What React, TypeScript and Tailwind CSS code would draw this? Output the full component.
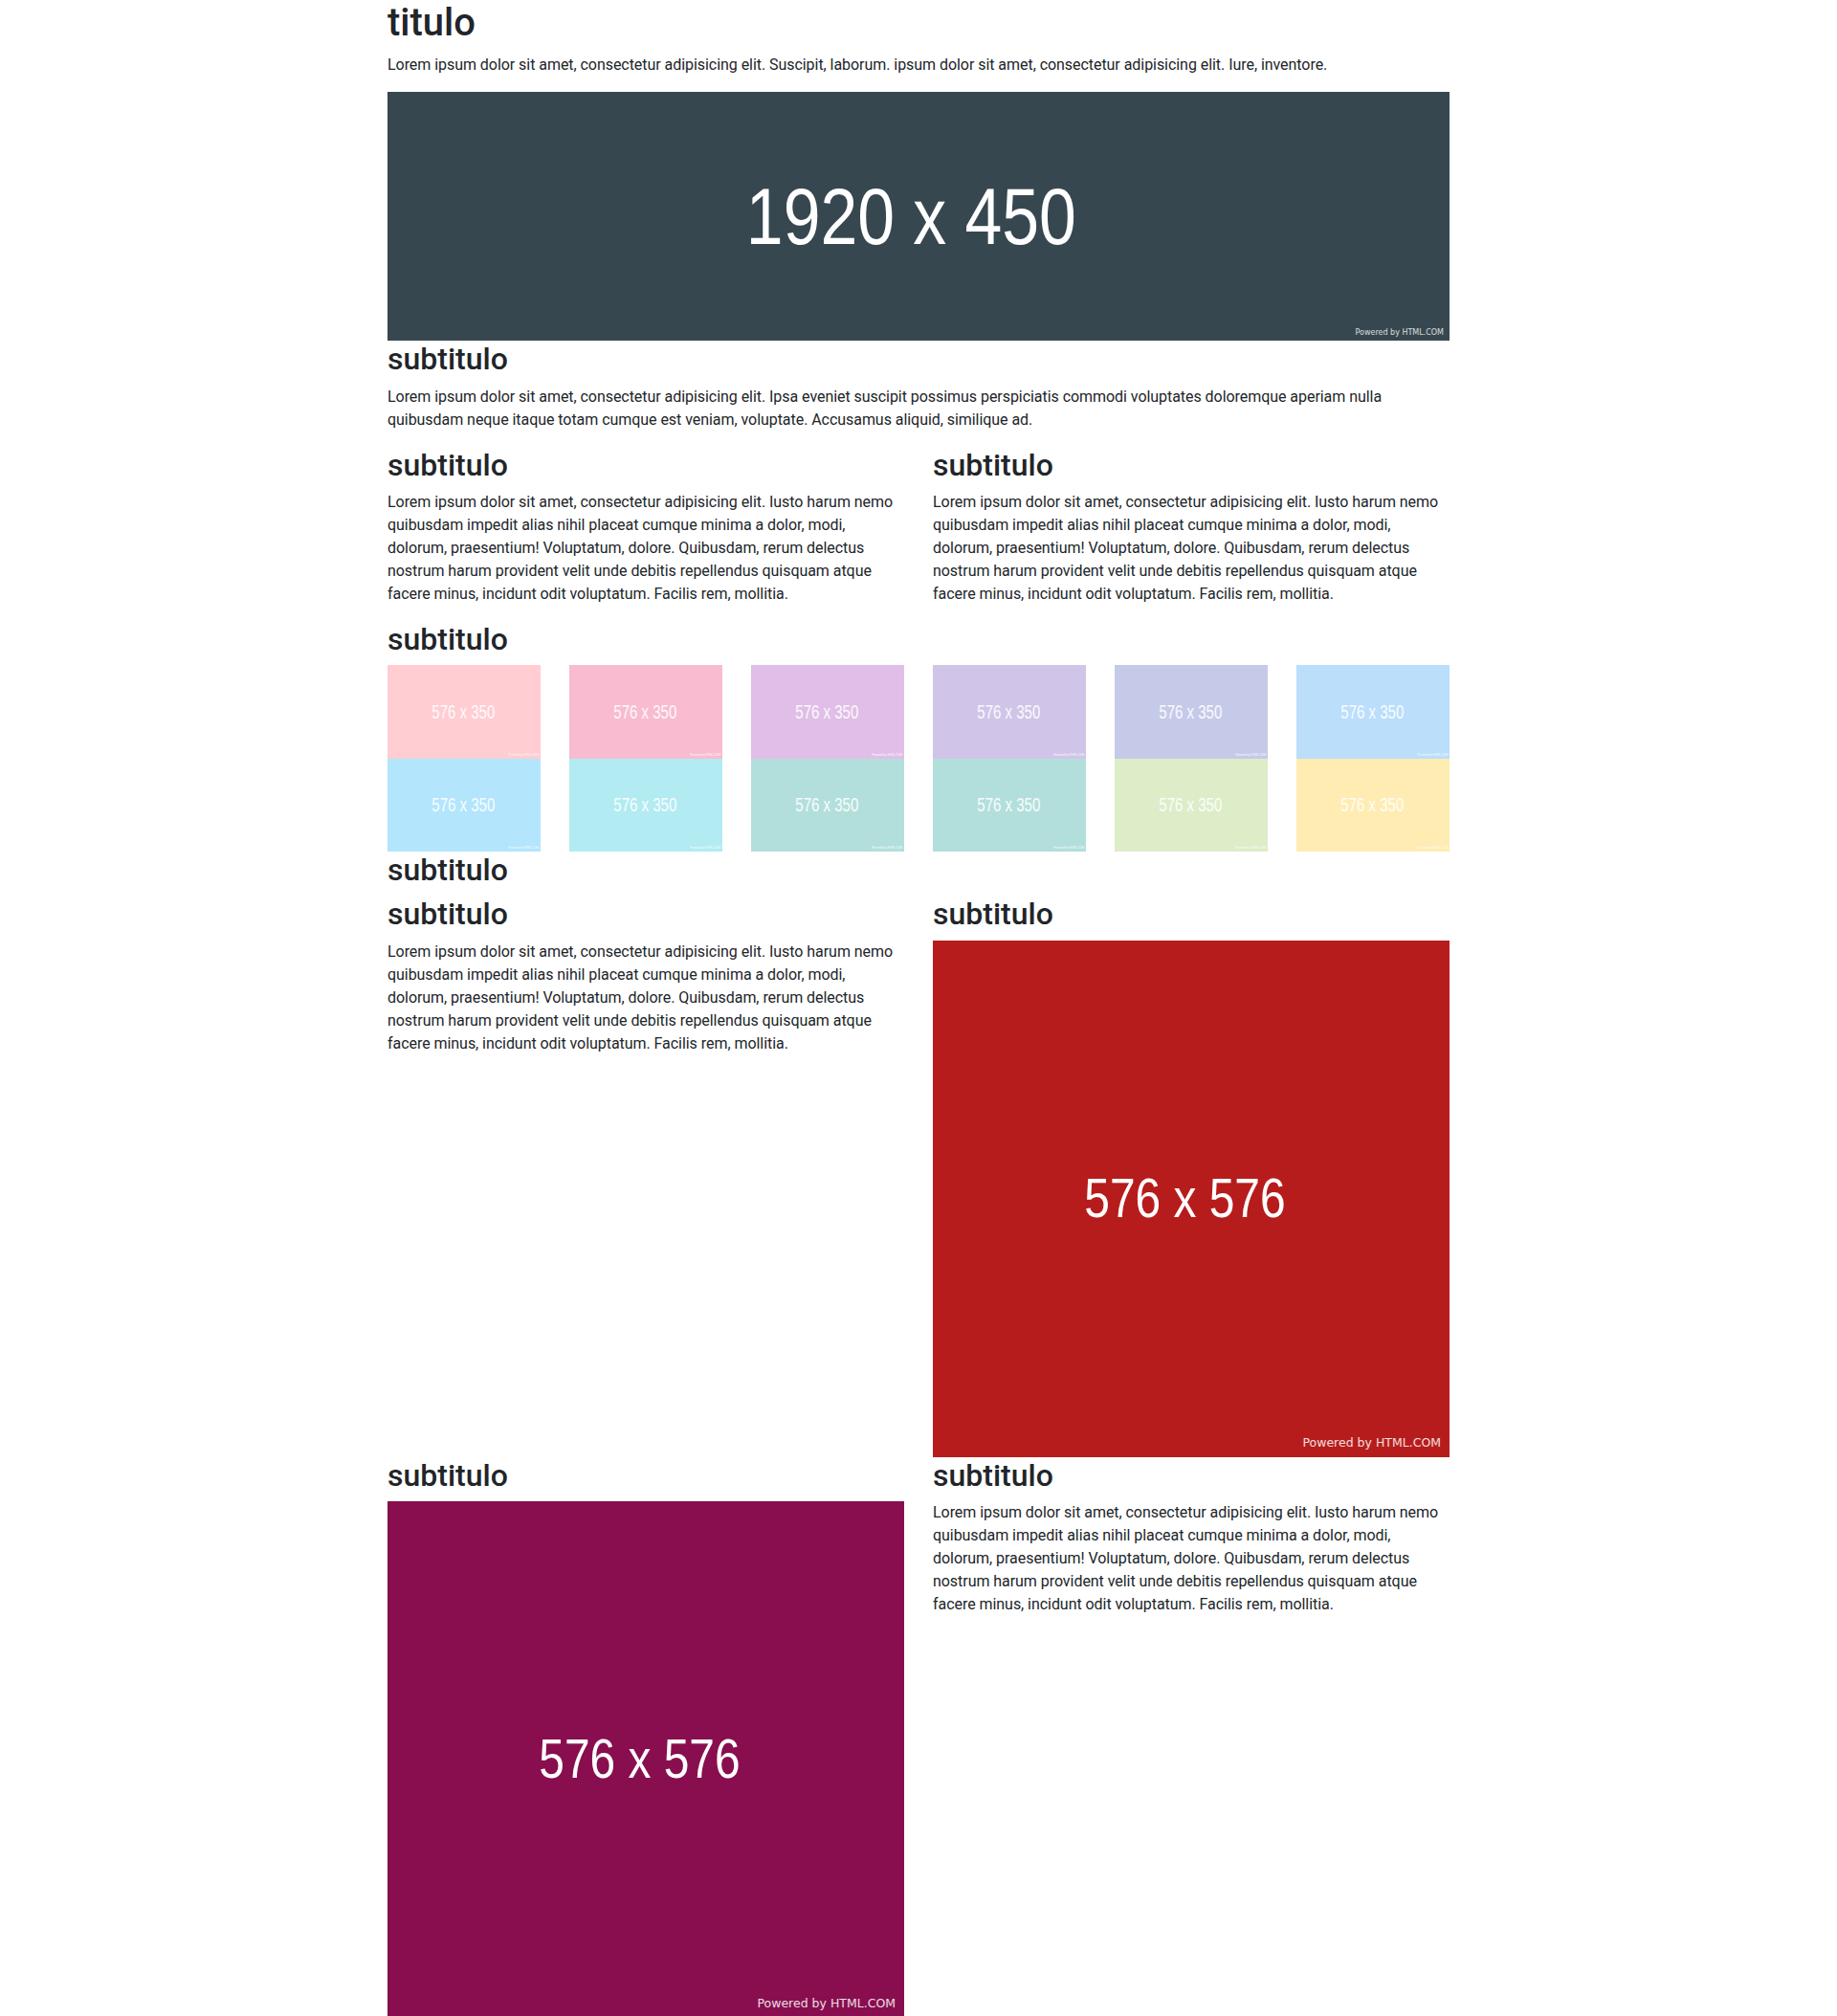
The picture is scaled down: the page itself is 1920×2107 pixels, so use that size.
import React from "react";

const lorem =
  "Lorem ipsum dolor sit amet, consectetur adipisicing elit. Iusto harum nemo quibusdam impedit alias nihil placeat cumque minima a dolor, modi, dolorum, praesentium! Voluptatum, dolore. Quibusdam, rerum delectus nostrum harum provident velit unde debitis repellendus quisquam atque facere minus, incidunt odit voluptatum. Facilis rem, mollitia.";

const H2 = ({ children }: { children: React.ReactNode }) => (
  <h2 className="text-[32px] leading-[1.2] font-medium mb-2">{children}</h2>
);

const Text = ({ children }: { children: React.ReactNode }) => (
  <p className="text-base leading-6 mb-4 tracking-[-0.05px]">{children}</p>
);

// placeholder boxes like the html.com dummy images
const Banner = () => (
  <div className="relative flex items-center justify-center w-full aspect-[1920/450] bg-[#37474f]">
    <span className="pr-[18px] text-white text-[84px] leading-none font-['Liberation_Sans',Arial,sans-serif] scale-x-[0.83]">
      1920 x 450
    </span>
    <span className="absolute right-[6px] bottom-[4px] text-[8px] leading-none text-white/80 font-['DejaVu_Sans',sans-serif]">
      Powered by HTML.COM
    </span>
  </div>
);

const Square = ({ color }: { color: string }) => (
  <div className={`relative flex items-center justify-center w-full aspect-square ${color}`}>
    <span className="pr-[16px] text-white text-[57px] leading-none font-['Liberation_Sans',Arial,sans-serif] scale-x-[0.84]">
      576 x 576
    </span>
    <span className="absolute right-[9px] bottom-[8px] text-[12.5px] leading-none text-white/85 font-['DejaVu_Sans',sans-serif]">
      Powered by HTML.COM
    </span>
  </div>
);

const Small = ({ color }: { color: string }) => (
  <div className={`relative flex items-center justify-center w-full aspect-[576/350] ${color}`}>
    <span className="pr-[3px] text-white/90 text-[20px] leading-none font-['Liberation_Sans',Arial,sans-serif] scale-x-[0.75]">
      576 x 350
    </span>
    <span className="absolute right-[2px] bottom-[2px] text-[3px] leading-none text-white/80">
      Powered by HTML.COM
    </span>
  </div>
);

const tiles = [
  ["bg-[#ffcdd2]", "bg-[#b3e5fc]"],
  ["bg-[#f8bbd0]", "bg-[#b2ebf2]"],
  ["bg-[#e1bee7]", "bg-[#b2dfdb]"],
  ["bg-[#d1c4e9]", "bg-[#b2dfdb]"],
  ["bg-[#c5cae9]", "bg-[#dcedc8]"],
  ["bg-[#bbdefb]", "bg-[#ffecb3]"],
];

export default function App() {
  return (
    <div className="bg-white text-[#212529] font-['Roboto',sans-serif]">
      <div className="mx-auto w-[1140px] px-[15px]">
        <h1 className="text-[40px] leading-[1.2] font-medium mb-2">titulo</h1>
        <Text>
          Lorem ipsum dolor sit amet, consectetur adipisicing elit. Suscipit, laborum. ipsum dolor sit amet,
          consectetur adipisicing elit. Iure, inventore.
        </Text>
        <Banner />

        <H2>subtitulo</H2>
        <Text>
          Lorem ipsum dolor sit amet, consectetur adipisicing elit. Ipsa eveniet suscipit possimus perspiciatis
          commodi voluptates doloremque aperiam nulla quibusdam neque itaque totam cumque est veniam, voluptate.
          Accusamus aliquid, similique ad.
        </Text>

        <div className="grid grid-cols-2 gap-x-[30px]">
          <div>
            <H2>subtitulo</H2>
            <Text>{lorem}</Text>
          </div>
          <div>
            <H2>subtitulo</H2>
            <Text>{lorem}</Text>
          </div>
        </div>

        <H2>subtitulo</H2>
        <div className="grid grid-cols-6 gap-x-[30px]">
          {tiles.map((t, i) => (
            <div key={i} className="flex flex-col">
              <Small color={t[0]} />
              <Small color={t[1]} />
            </div>
          ))}
        </div>

        <H2>subtitulo</H2>
        <div className="grid grid-cols-2 gap-x-[30px]">
          <div>
            <H2>subtitulo</H2>
            <Text>{lorem}</Text>
          </div>
          <div>
            <H2>subtitulo</H2>
            <Square color="bg-[#b71c1c]" />
          </div>
        </div>

        <div className="grid grid-cols-2 gap-x-[30px]">
          <div>
            <H2>subtitulo</H2>
            <Square color="bg-[#880e4f]" />
          </div>
          <div>
            <H2>subtitulo</H2>
            <Text>{lorem}</Text>
          </div>
        </div>
      </div>
    </div>
  );
}
